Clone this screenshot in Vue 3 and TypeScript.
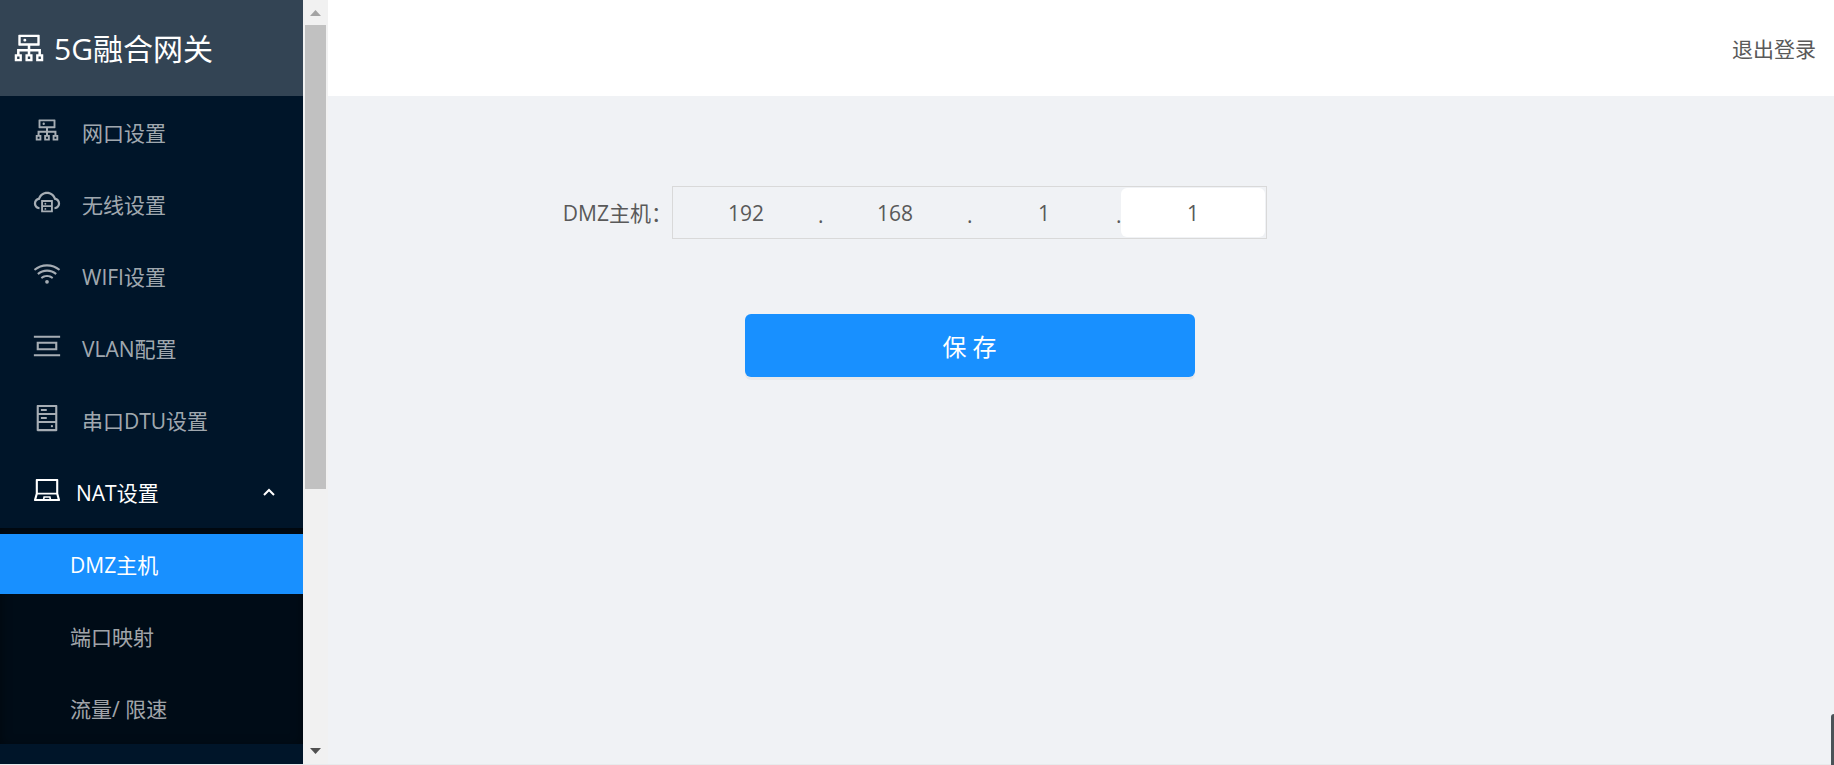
<script setup lang="ts">
import { ref } from 'vue'

interface MenuItem {
  key: string
  label: string
  icon: string
}

const icons: Record<string, string> = {
  cluster:
    'M888 680h-54V540H546v-92h238c8.8 0 16-7.2 16-16V168c0-8.8-7.2-16-16-16H240c-8.8 0-16 7.2-16 16v264c0 8.8 7.2 16 16 16h238v92H190v140h-54c-4.4 0-8 3.6-8 8v176c0 4.4 3.6 8 8 8h176c4.4 0 8-3.6 8-8V688c0-4.4-3.6-8-8-8h-54v-72h220v72h-54c-4.4 0-8 3.6-8 8v176c0 4.4 3.6 8 8 8h176c4.4 0 8-3.6 8-8V688c0-4.4-3.6-8-8-8h-54v-72h220v72h-54c-4.4 0-8 3.6-8 8v176c0 4.4 3.6 8 8 8h176c4.4 0 8-3.6 8-8V688c0-4.4-3.6-8-8-8zM192 744h64v64h-64zM480 744h64v64h-64zM768 744h64v64h-64zM288 216h448v168H288zM360 300a40 40 0 1 0 80 0 40 40 0 1 0-80 0z',
  cloud:
    'M704 446H320c-4.4 0-8 3.6-8 8v402c0 4.4 3.6 8 8 8h384c4.4 0 8-3.6 8-8V454c0-4.4-3.6-8-8-8zM376 510h272v117H376zM376 683h272v117H376zM424 748a32 32 0 1 0 64 0 32 32 0 1 0-64 0zM424 570a32 32 0 1 0 64 0 32 32 0 1 0-64 0zM811.4 368.9C765.6 248 648.9 162 512.2 162S258.8 247.9 213 368.8C126.9 391.5 63.5 470.2 64 563.6 64.6 668 145.6 752.9 247.6 762c4.7.4 8.7-3.3 8.7-8v-60.4c0-4-3-7.4-7-7.9-27-3.4-52.5-15.2-72.1-34.5-24-23.5-37.2-55.1-37.2-88.6 0-28 9.1-54.4 26.2-76.4 16.7-21.4 40.2-36.9 66.1-43.7l37.9-10 13.9-36.7c8.6-22.8 20.6-44.2 35.7-63.5 14.9-19.2 32.6-36 52.4-50 41.1-28.9 89.5-44.2 140-44.2s98.9 15.3 140 44.2c19.9 14 37.5 30.8 52.4 50 15.1 19.3 27.1 40.7 35.7 63.5l13.8 36.6 37.8 10c54.2 14.4 92.1 63.7 92.1 120 0 33.6-13.2 65.1-37.2 88.6-19.5 19.2-44.9 31.1-71.9 34.5-4 .5-6.9 3.9-6.9 7.9V754c0 4.7 4.1 8.4 8.8 8 101.7-9.2 182.5-94 183.2-198.2.6-93.4-62.7-172.1-148.6-194.9z',
  wifi:
    'M723 620.5C666.8 571.6 593.4 542 513 542s-153.8 29.6-210.1 78.6a8.1 8.1 0 0 0-.8 11.2l36 42.9c2.9 3.4 8 3.8 11.4.9C393.1 637.2 450.3 614 513 614s119.9 23.2 163.5 61.5c3.4 2.9 8.5 2.5 11.4-.9l36-42.9c2.8-3.3 2.4-8.3-.9-11.2zM840.4 480.4C751.7 406.5 637.6 362 513 362s-238.7 44.5-327.5 118.4a8 8 0 0 0-1 11.3l36 42.9c2.8 3.4 7.9 3.8 11.2 1C308 472.2 406.1 434 513 434s205 38.2 281.2 101.6c3.4 2.8 8.4 2.4 11.2-1l36-42.9c2.8-3.4 2.4-8.5-1-11.3zM957.1 341.4C835.7 241.8 680.3 182 511 182c-168.2 0-322.6 59-443.7 157.4a8 8 0 0 0-1.1 11.4l36 42.9c2.8 3.3 7.8 3.8 11.1 1.1C222 306.3 360.3 254 511 254c151.8 0 291 53.5 400 142.7 3.4 2.8 8.4 2.3 11.2-1.1l36-42.9c2.9-3.4 2.4-8.5-1.1-11.3zM448 778a64 64 0 1 0 128 0 64 64 0 1 0-128 0z',
  vlan: 'M64 792h896v72H64zM64 160h896v72H64zM160 364h704v296H160zM232 436h560v152H232z',
  serial:
    'M832 64H192c-17.7 0-32 14.3-32 32v832c0 17.7 14.3 32 32 32h640c17.7 0 32-14.3 32-32V96c0-17.7-14.3-32-32-32zM232 136h560v208H232zM232 408h560v208H232zM232 680h560v208H232zM304 208h200v64H304zM304 480h200v64H304zM640 788a40 40 0 1 0 80 0 40 40 0 1 0-80 0z',
  laptop:
    'M956.9 845.1L896.4 632V168c0-17.7-14.3-32-32-32h-704c-17.7 0-32 14.3-32 32v464L67.9 845.1C60.4 866 75.8 888 98 888h828.8c22.2 0 37.6-22 30.1-42.9zM200.4 208h624v395h-624zM428.7 816l8.1-37h150.3l8.1 37zM652.7 816l-19.1-86.7c-.8-3.7-4.1-6.3-7.8-6.3H398.2c-3.8 0-7 2.6-7.8 6.3L371.3 816H151l42.3-149h638.2l42.3 149z',
}

const items: MenuItem[] = [
  { key: 'port', label: '网口设置', icon: 'cluster' },
  { key: 'wireless', label: '无线设置', icon: 'cloud' },
  { key: 'wifi', label: 'WIFI设置', icon: 'wifi' },
  { key: 'vlan', label: 'VLAN配置', icon: 'vlan' },
  { key: 'dtu', label: '串口DTU设置', icon: 'serial' },
]

const subItems = [
  { key: 'dmz', label: 'DMZ主机' },
  { key: 'mapping', label: '端口映射' },
  { key: 'limit', label: '流量/ 限速' },
]

const active = ref('dmz')
const open = ref(true)
const octets = ref(['192', '168', '1', '1'])
</script>

<template>
  <div class="layout">
    <aside class="sider">
      <div class="brand">
        <svg class="brand-icon" viewBox="0 0 1024 1024" aria-hidden="true">
          <path :d="icons.cluster" fill-rule="evenodd" />
        </svg>
        <h1>5G融合网关</h1>
      </div>
      <nav class="menu">
        <a
          v-for="item in items"
          :key="item.key"
          href="#"
          class="item"
          @click.prevent="active = item.key"
        >
          <svg class="icon" viewBox="0 0 1024 1024" aria-hidden="true">
            <path :d="icons[item.icon]" fill-rule="evenodd" />
          </svg>
          <span>{{ item.label }}</span>
        </a>
        <button type="button" class="item group" :aria-expanded="open" @click="open = !open">
          <svg class="icon" viewBox="0 0 1024 1024" aria-hidden="true">
            <path :d="icons.laptop" fill-rule="evenodd" />
          </svg>
          <span>NAT设置</span>
          <svg class="chevron" viewBox="0 0 14 10" aria-hidden="true">
            <path d="M2 8L7 3L12 8" />
          </svg>
        </button>
        <div v-if="open" class="submenu">
          <a
            v-for="sub in subItems"
            :key="sub.key"
            href="#"
            class="item sub"
            :class="{ active: active === sub.key }"
            @click.prevent="active = sub.key"
            >{{ sub.label }}</a
          >
        </div>
      </nav>
    </aside>

    <div class="scrollbar" aria-hidden="true">
      <svg class="arrow up" viewBox="0 0 25 25"><path d="M7 16L12.5 10L18 16z" /></svg>
      <div class="track"><div class="thumb"></div></div>
      <svg class="arrow down" viewBox="0 0 25 25"><path d="M7 9L12.5 15L18 9z" /></svg>
    </div>

    <div class="main">
      <header class="header">
        <a href="#" class="logout" @click.prevent>退出登录</a>
      </header>
      <main class="content">
        <form class="form" @submit.prevent>
          <label class="label" for="octet-0">DMZ主机：</label>
          <div class="ip">
            <template v-for="(_, i) in octets" :key="i">
              <span v-if="i > 0" class="dot">.</span>
              <input
                :id="`octet-${i}`"
                v-model="octets[i]"
                class="octet"
                :class="{ filled: i === 3 }"
                type="text"
                maxlength="3"
                :aria-label="`DMZ主机 ${i + 1}`"
              />
            </template>
          </div>
          <button type="submit" class="save">保 存</button>
        </form>
      </main>
    </div>
    <div class="edge-tab"></div>
  </div>
</template>

<style>
body {
  background: #f0f2f5;
}
</style>

<style scoped>
.layout {
  box-sizing: border-box;
  display: flex;
  height: 100vh;
  overflow: hidden;
  border-bottom: 1px solid #e8eaec;
  background: #f0f2f5;
  color: #595959;
  font-family: 'Open Sans', 'Noto Sans CJK SC', sans-serif;
  font-size: 21px;
  line-height: 32px;
}

.sider {
  flex: none;
  width: 303px;
  overflow: hidden;
  background: #001529;
}

.brand {
  display: flex;
  align-items: center;
  gap: 6px;
  height: 96px;
  padding-left: 10px;
  background: #334454;
  color: #fff;
}

.brand-icon {
  width: 38px;
  height: 38px;
  fill: currentColor;
}

.brand h1 {
  margin: 0;
  padding-top: 2px;
  font-size: 30px;
  font-weight: 400;
  line-height: 48px;
}

.menu {
  padding-top: 6px;
}

.item {
  box-sizing: border-box;
  display: flex;
  align-items: center;
  gap: 20px;
  width: 100%;
  height: 60px;
  margin: 0 0 12px;
  padding: 2px 27px 0 32px;
  border: 0;
  background: none;
  color: rgba(255, 255, 255, 0.65);
  font: inherit;
  text-align: left;
  text-decoration: none;
  cursor: pointer;
}

.icon {
  flex: none;
  width: 30px;
  height: 30px;
  margin-bottom: 6px;
  fill: currentColor;
}

.group {
  gap: 14px;
  margin-bottom: 6px;
  color: #fff;
}

.chevron {
  width: 14px;
  height: 10px;
  margin-bottom: 2px;
  margin-left: auto;
  fill: none;
  stroke: currentColor;
  stroke-width: 2;
}

.submenu {
  padding: 6px 0;
  background: #000c17;
  box-shadow: inset 0 3px 12px rgba(0, 0, 0, 0.45);
}

.sub {
  padding-left: 70px;
}

.sub:last-child {
  margin-bottom: 0;
}

.active {
  background: #1890ff;
  color: #fff;
}

.scrollbar {
  display: flex;
  flex: none;
  flex-direction: column;
  width: 25px;
  background: #f1f1f1;
}

.arrow {
  width: 25px;
  height: 25px;
}

.up {
  fill: #a3a3a3;
}

.down {
  fill: #505050;
}

.track {
  flex: 1;
  padding: 0 2px;
}

.thumb {
  height: 65%;
  background: #c1c1c1;
}

.main {
  display: flex;
  flex: 1;
  flex-direction: column;
  min-width: 0;
}

.header {
  display: flex;
  align-items: center;
  justify-content: flex-end;
  height: 96px;
  padding-right: 18px;
  background: #fff;
}

.logout {
  padding-top: 2px;
  color: inherit;
  text-decoration: none;
}

.content {
  flex: 1;
  padding-top: 90px;
}

.form {
  display: grid;
  grid-template-columns: minmax(0, 344fr) minmax(0, 595fr) minmax(0, 567fr);
  row-gap: 75px;
  align-items: center;
}

.label {
  text-align: right;
}

.ip {
  box-sizing: border-box;
  display: flex;
  height: 53px;
  padding: 1px;
  border: 1px solid #d9d9d9;
}

.octet {
  box-sizing: border-box;
  flex: 1;
  min-width: 0;
  padding: 0;
  border: 0;
  border-radius: 6px;
  outline: 0;
  background: transparent;
  color: inherit;
  font: inherit;
  text-align: center;
}

.filled {
  background: #fff;
}

.dot {
  width: 5px;
  padding-top: 11px;
}

.save {
  grid-column: 2;
  justify-self: center;
  width: 450px;
  height: 63px;
  padding: 2px 0 0;
  border: 0;
  border-radius: 6px;
  background: #1890ff;
  box-shadow: 0 3px 0 rgba(0, 0, 0, 0.04);
  color: #fff;
  font: inherit;
  font-size: 24px;
  cursor: pointer;
}

.edge-tab {
  position: absolute;
  right: 0;
  bottom: 0;
  width: 3px;
  height: 51px;
  border-top-left-radius: 3px;
  background: #4b5358;
}
</style>
